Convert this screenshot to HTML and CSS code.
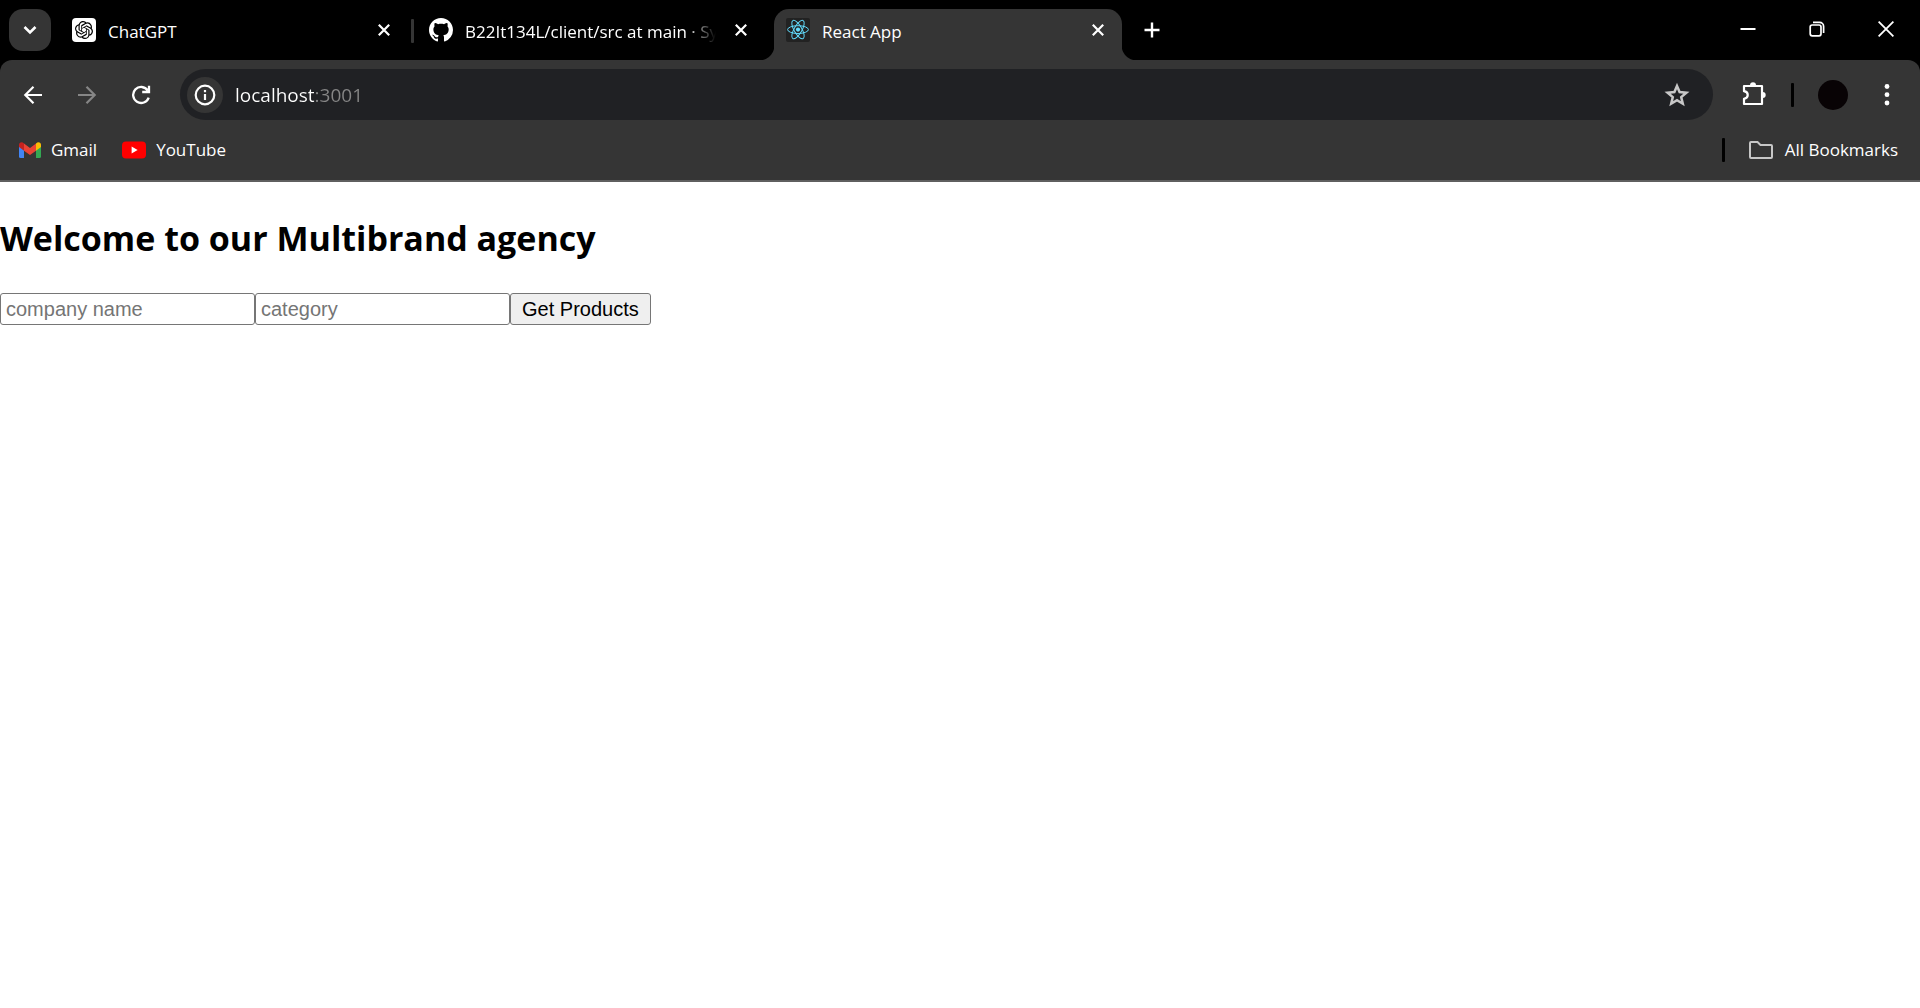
FILE: index.html
```html
<!DOCTYPE html>
<html lang="en">
<head>
<meta charset="utf-8">
<meta name="viewport" content="width=device-width, initial-scale=1">
<title>React App</title>
<link rel="stylesheet" href="styles.css">
</head>
<body>
<header class="browser">
  <div class="tab-strip">
    <button class="tab-search" type="button" aria-label="Search tabs">
      <svg width="14" height="14" viewBox="0 0 14 14" fill="none" stroke="#fff" stroke-width="2.6"><path d="M1.5 4 7 9.5 12.5 4"/></svg>
    </button>
    <nav class="tabs" aria-label="Open tabs">
      <div class="tab">
        <svg class="favicon" viewBox="0 0 24 24"><rect width="24" height="24" rx="4" fill="#fff"/><path transform="translate(3 3) scale(.75)" d="M22.2819 9.8211a5.9847 5.9847 0 0 0-.5157-4.9108 6.0462 6.0462 0 0 0-6.5098-2.9A6.0651 6.0651 0 0 0 4.9807 4.1818a5.9847 5.9847 0 0 0-3.9977 2.9 6.0462 6.0462 0 0 0 .7427 7.0966 5.98 5.98 0 0 0 .511 4.9107 6.051 6.051 0 0 0 6.5146 2.9001A5.9847 5.9847 0 0 0 13.2599 24a6.0557 6.0557 0 0 0 5.7718-4.2058 5.9894 5.9894 0 0 0 3.9977-2.9001 6.0557 6.0557 0 0 0-.7475-7.0729zm-9.022 12.6081a4.4755 4.4755 0 0 1-2.8764-1.0408l.1419-.0804 4.7783-2.7582a.7948.7948 0 0 0 .3927-.6813v-6.7369l2.02 1.1686a.071.071 0 0 1 .038.052v5.5826a4.504 4.504 0 0 1-4.4945 4.4944zm-9.6607-4.1254a4.4708 4.4708 0 0 1-.5346-3.0137l.142.0852 4.783 2.7582a.7712.7712 0 0 0 .7806 0l5.8428-3.3685v2.3324a.0804.0804 0 0 1-.0332.0615L9.74 19.9502a4.4992 4.4992 0 0 1-6.1408-1.6464zM2.3408 7.8956a4.485 4.485 0 0 1 2.3655-1.9728V11.6a.7664.7664 0 0 0 .3879.6765l5.8144 3.3543-2.0201 1.1685a.0757.0757 0 0 1-.071 0l-4.8303-2.7865A4.504 4.504 0 0 1 2.3408 7.872zm16.5963 3.8558L13.1038 8.364 15.1192 7.2a.0757.0757 0 0 1 .071 0l4.8303 2.7913a4.4944 4.4944 0 0 1-.6765 8.1042v-5.6772a.79.79 0 0 0-.407-.667zm2.0107-3.0231l-.142-.0852-4.7735-2.7818a.7759.7759 0 0 0-.7854 0L9.409 9.2297V6.8974a.0662.0662 0 0 1 .0284-.0615l4.8303-2.7866a4.4992 4.4992 0 0 1 6.6802 4.66zM8.3065 12.863l-2.02-1.1638a.0804.0804 0 0 1-.038-.0567V6.0742a4.4992 4.4992 0 0 1 7.3757-3.4537l-.142.0805L8.704 5.459a.7948.7948 0 0 0-.3927.6813zm1.0976-2.3654l2.602-1.4998 2.6069 1.4998v2.9994l-2.5974 1.4997-2.6067-1.4997Z"/></svg>
        <a class="tab-title" href="#chatgpt">ChatGPT</a>
        <button class="tab-close" type="button" aria-label="Close ChatGPT"><svg width="12" height="12" viewBox="0 0 12 12" stroke="#fff" stroke-width="2.2"><path d="M.8.8l10.4 10.4M11.2.8.8 11.2"/></svg></button>
      </div>
      <div class="tab-divider"></div>
      <div class="tab">
        <svg class="favicon" viewBox="0 0 16 16" fill="#fff"><path d="M8 0C3.58 0 0 3.58 0 8c0 3.54 2.29 6.53 5.47 7.59.4.07.55-.17.55-.38 0-.19-.01-.82-.01-1.49-2.01.37-2.53-.49-2.69-.94-.09-.23-.48-.94-.82-1.13-.28-.15-.68-.52-.01-.53.63-.01 1.08.58 1.23.82.72 1.21 1.87.87 2.33.66.07-.52.28-.87.51-1.07-1.78-.2-3.64-.89-3.64-3.95 0-.87.31-1.59.82-2.15-.08-.2-.36-1.02.08-2.12 0 0 .67-.21 2.2.82.64-.18 1.32-.27 2-.27s1.36.09 2 .27c1.53-1.04 2.2-.82 2.2-.82.44 1.1.16 1.92.08 2.12.51.56.82 1.27.82 2.15 0 3.07-1.87 3.75-3.65 3.95.29.25.54.73.54 1.48 0 1.07-.01 1.93-.01 2.2 0 .21.15.46.55.38A8.01 8.01 0 0 0 16 8c0-4.42-3.58-8-8-8z"/></svg>
        <a class="tab-title tab-title-fade" href="#github">B22It134L/client/src at main · Sy</a>
        <button class="tab-close" type="button" aria-label="Close GitHub"><svg width="12" height="12" viewBox="0 0 12 12" stroke="#fff" stroke-width="2.2"><path d="M.8.8l10.4 10.4M11.2.8.8 11.2"/></svg></button>
      </div>
      <div class="tab-divider tab-divider-hidden"></div>
      <div class="tab tab-active">
        <svg class="favicon" viewBox="0 0 24 24"><rect width="24" height="24" rx="2" fill="#222"/><g fill="none" stroke="#61dafb" stroke-width="1"><ellipse cx="12" cy="11.6" rx="10.4" ry="3.9"/><ellipse cx="12" cy="11.6" rx="10.4" ry="3.9" transform="rotate(60 12 11.6)"/><ellipse cx="12" cy="11.6" rx="10.4" ry="3.9" transform="rotate(120 12 11.6)"/></g><circle cx="12" cy="11.6" r="2.1" fill="#61dafb"/></svg>
        <a class="tab-title" href="#app" aria-current="page">React App</a>
        <button class="tab-close" type="button" aria-label="Close React App"><svg width="12" height="12" viewBox="0 0 12 12" stroke="#fff" stroke-width="2.2"><path d="M.8.8l10.4 10.4M11.2.8.8 11.2"/></svg></button>
      </div>
    </nav>
    <button class="new-tab" type="button" aria-label="New tab"><svg width="16" height="16" viewBox="0 0 16 16" stroke="#fff" stroke-width="2.4"><path d="M8 .5v15M.5 8h15"/></svg></button>
    <div class="window-controls">
      <button type="button" aria-label="Minimize"><svg width="16" height="16" viewBox="0 0 16 16" fill="#fff"><path d="M.5 7h15v2H.5z"/></svg></button>
      <button type="button" aria-label="Restore"><svg width="16" height="16" viewBox="0 0 16 16" fill="none" stroke="#fff" stroke-width="1.7"><rect x="1.2" y="4" width="10.8" height="10.8" rx="2"/><path d="M4 1.4h6.6a4 4 0 0 1 4 4V12"/></svg></button>
      <button type="button" aria-label="Close window"><svg width="16" height="16" viewBox="0 0 16 16" stroke="#fff" stroke-width="1.8"><path d="M.6.6l14.8 14.8M15.4.6.6 15.4"/></svg></button>
    </div>
  </div>

  <div class="panel">
    <div class="toolbar">
      <div class="nav-buttons">
        <button type="button" aria-label="Back"><svg width="20" height="20" viewBox="0 0 20 20" fill="none" stroke="#fff" stroke-width="2.2"><path d="M19 10H2.5M10.5 1.8 2.3 10l8.2 8.2"/></svg></button>
        <button type="button" aria-label="Forward" disabled><svg width="20" height="20" viewBox="0 0 20 20" fill="none" stroke="#868686" stroke-width="2.2"><path d="M1 10h16.500M9.500 1.800 17.700 10l-8.200 8.200"/></svg></button>
        <button type="button" aria-label="Reload"><svg width="20" height="20" viewBox="0 0 20 20" fill="none" stroke="#fff" stroke-width="2.3"><path d="M16.800 5.500A8 8 0 1 0 17.700 12.600M18 .8V7h-6.800"/></svg></button>
      </div>
      <div class="omnibox">
        <button class="site-info" type="button" aria-label="Site information"><svg width="22" height="22" viewBox="0 0 22 22" fill="none" stroke="#fff" stroke-width="2.2"><circle cx="11" cy="11" r="9.300"/><path d="M11 10v6M11 6v2.300"/></svg></button>
        <input class="address" type="text" value="localhost:3001" aria-label="Address bar" spellcheck="false">
        <button class="star" type="button" aria-label="Bookmark this page"><svg width="26" height="26" viewBox="0 0 26 26" fill="none" stroke="#c7c7c7" stroke-width="2.500"><path d="m13 3.900 2.600 6.200 6.800.6-5.200 4.400 1.600 6.600L13 18.200l-5.800 3.500 1.600-6.600-5.200-4.400 6.800-.6z"/></svg></button>
      </div>
      <div class="toolbar-actions">
        <button type="button" aria-label="Extensions"><svg width="26" height="26" viewBox="1 1 26 26"><path d="M4 5h18v18H4v-5.200c5-.8 5-6.800 0-7.600z" fill="none" stroke="#fff" stroke-width="2.200" stroke-linejoin="round"/><path d="M10 4.300a3 3 0 0 1 6 0zM22.700 11a3 3 0 0 1 0 6z" fill="#fff"/></svg></button>
        <div class="bar"></div>
        <button class="avatar" type="button" aria-label="Profile"></button>
        <button class="menu" type="button" aria-label="Menu"><svg width="6" height="24" viewBox="0 0 6 24" fill="#fff"><circle cx="3" cy="3.500" r="2.400"/><circle cx="3" cy="11.700" r="2.400"/><circle cx="3" cy="20" r="2.400"/></svg></button>
      </div>
    </div>
    <nav class="bookmarks" aria-label="Bookmarks">
      <a href="#gmail"><svg width="22" height="16" viewBox="0 0 22 16"><path fill="#4285f4" d="M0 3h5v13H1.500A1.500 1.500 0 0 1 0 14.500z"/><path fill="#34a853" d="M17 3h5v11.500a1.500 1.500 0 0 1-1.500 1.500H17z"/><path fill="#fbbc04" d="M17 1.500C19-.7 22 .2 22 2.800V5l-5 3.800z"/><path fill="#ea4335" d="m5 1.500 6 4.500 6-4.500v7.300L11 13 5 8.800z"/><path fill="#c5221f" d="M0 2.800C0 .2 3-.7 5 1.500v7.300L0 5z"/></svg>Gmail</a>
      <a href="#youtube"><svg width="24" height="18" viewBox="0 0 24 18"><rect y=".5" width="24" height="17" rx="4" fill="#f00"/><path fill="#fff" d="M9.600 5.500v7l6-3.500z"/></svg>YouTube</a>
      <a class="all-bookmarks" href="#bookmarks"><svg width="24" height="18" viewBox="0 0 24 18" fill="none" stroke="#c7c7c7" stroke-width="2"><path d="M2 1h6.500l3 3H22a1 1 0 0 1 1 1v11a1 1 0 0 1-1 1H2a1 1 0 0 1-1-1V2a1 1 0 0 1 1-1z"/></svg>All Bookmarks</a>
    </nav>
  </div>
</header>

<main class="page">
  <h2>Welcome to our Multibrand agency</h2>
  <form class="search">
    <input type="text" placeholder="company name" aria-label="company name">
    <input type="text" placeholder="category" aria-label="category">
    <button type="button">Get Products</button>
  </form>
</main>
</body>
</html>
```
FILE: styles.css
```css
* {
  box-sizing: border-box;
}

body {
  margin: 0;
  background: #fff;
  color: #000;
  font-family: "Open Sans", "Noto Sans", sans-serif;
}

svg {
  display: block;
  flex: none;
}

.browser {
  background: #000;
  color: #fff;
  font-size: 17px;
  line-height: 24px;
}

.browser button {
  display: flex;
  align-items: center;
  justify-content: center;
  flex: none;
  padding: 0;
  border: 0;
  background: none;
}

.browser a {
  color: inherit;
  text-decoration: none;
}

/* Tab strip */
.tab-strip {
  display: flex;
  align-items: flex-end;
  height: 60px;
  padding-left: 9px;
}

.browser .tab-search {
  width: 42px;
  height: 42px;
  margin: 0 9px 9px 0;
  border-radius: 14px;
  background: #353535;
}

.tabs {
  display: flex;
  flex: 0 1 1062px;
  min-width: 0;
}

.tab {
  display: flex;
  flex: 1 1 0;
  align-items: center;
  min-width: 0;
  height: 51px;
  padding: 0 18px 9px 12px;
}

.tab-active {
  position: relative;
  border-radius: 15px 15px 0 0;
  background: #353535;
}

/* Concave feet that join the active tab to the toolbar */
.tab-active::before,
.tab-active::after {
  content: "";
  position: absolute;
  bottom: 0;
  width: 15px;
  height: 15px;
}

.tab-active::before {
  right: 100%;
  background: radial-gradient(circle at 0 0, transparent 15px, #353535 16px);
}

.tab-active::after {
  left: 100%;
  background: radial-gradient(circle at 100% 0, transparent 15px, #353535 16px);
}

.favicon {
  width: 24px;
  height: 24px;
}

.tab-title {
  flex: 1;
  min-width: 0;
  margin: 3px 16px 0 12px;
  overflow: hidden;
  white-space: nowrap;
}

.tab-title-fade {
  mask-image: linear-gradient(to left, transparent 3px, #000 33px);
}

.tab-divider {
  width: 3px;
  height: 24px;
  margin: 10px 3px 0;
  border-radius: 1px;
  background: #353535;
}

.tab-divider-hidden {
  visibility: hidden;
}

.browser .new-tab {
  width: 36px;
  height: 36px;
  margin: 0 0 12px 12px;
}

.window-controls {
  display: flex;
  align-self: flex-start;
  margin-left: auto;
}

.window-controls button {
  width: 69px;
  height: 58px;
}

/* Toolbar and bookmarks */
.panel {
  border-bottom: 2px solid #5f5f5f;
  border-radius: 12px 12px 0 0;
  background: #353535;
}

.toolbar {
  display: flex;
  align-items: center;
  height: 60px;
  padding: 9px 21px 0 6px;
}

.nav-buttons {
  display: flex;
  margin-right: 12px;
}

.nav-buttons button {
  width: 54px;
  height: 51px;
}

.omnibox {
  display: flex;
  flex: 1;
  align-items: center;
  min-width: 0;
  height: 51px;
  padding: 0 23px 0 7px;
  border-radius: 26px;
  background: #202124;
}

.browser .site-info {
  width: 36px;
  height: 36px;
  border-radius: 50%;
  background: #353535;
}

/* The host is bright and the port is dim */
.address {
  flex: 1;
  min-width: 0;
  height: 30px;
  margin-left: 12px;
  padding: 0;
  border: 0;
  outline: 0;
  background: linear-gradient(to right, #fff 80px, #868686 80px);
  -webkit-background-clip: text;
  background-clip: text;
  -webkit-text-fill-color: transparent;
  font: 19px/30px "Open Sans", "Noto Sans", sans-serif;
}

.toolbar-actions {
  display: flex;
  align-items: center;
  margin-left: 28px;
}

.bar {
  width: 3px;
  height: 24px;
  margin: 0 24px;
  border-radius: 1px;
  background: #000;
}

.browser .avatar {
  width: 30px;
  height: 30px;
  border-radius: 50%;
  background: #080305;
}

.browser .menu {
  width: 24px;
  height: 30px;
  margin-left: 27px;
}

.bookmarks {
  display: flex;
  align-items: center;
  gap: 25px;
  height: 60px;
  padding: 0 22px 0 19px;
}

.bookmarks a {
  display: flex;
  align-items: center;
  gap: 10px;
}

.bookmarks .all-bookmarks {
  gap: 12px;
  margin-left: auto;
}

.all-bookmarks::before {
  content: "";
  width: 3px;
  height: 24px;
  margin-right: 12px;
  border-radius: 1px;
  background: #000;
}

/* Page */
.page h2 {
  margin: 32px 0 30px;
  font-size: 34px;
  font-weight: 700;
  line-height: 49px;
}

.search {
  display: flex;
}

.search input,
.search button {
  height: 32px;
  border: 1px solid #767676;
  border-radius: 3px;
  font: 20px/24px "Liberation Sans", Arial, sans-serif;
}

.search input {
  width: 255px;
  padding: 2px 5px;
  background: #fff;
}

.search input::placeholder {
  color: #757575;
}

.search button {
  padding: 0 11px;
  background: #efefef;
  color: #000;
}
```
